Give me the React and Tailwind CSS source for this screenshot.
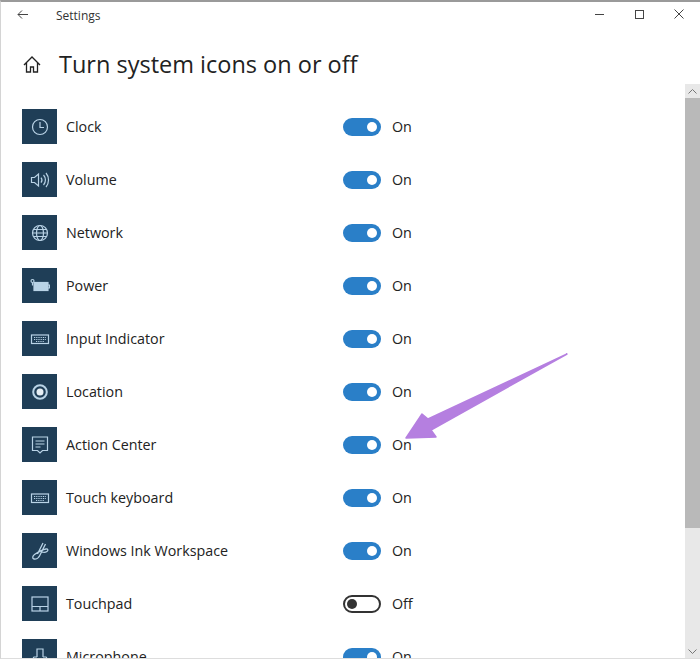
const ink = '#b9d3e6';

function ClockIcon() {
  return (
    <svg width="20" height="20" viewBox="0 0 20 20" fill="none" stroke={ink} strokeWidth="1.2">
      <circle cx="10" cy="10" r="7.5" />
      <path d="M10 5v5.500h4" />
    </svg>
  );
}

function VolumeIcon() {
  return (
    <svg width="20" height="20" viewBox="0 0 20 20" fill="none" stroke={ink} strokeWidth="1.2">
      <path d="M1.500 7.500h3l4-3.500v12l-4-3.500h-3z" />
      <path d="M11 7.500a4 4 0 0 1 0 5M13.500 5a7.500 7.500 0 0 1 0 10M16 3a11 11 0 0 1 0 14" />
    </svg>
  );
}

function NetworkIcon() {
  return (
    <svg width="20" height="20" viewBox="0 0 20 20" fill="none" stroke={ink} strokeWidth="1.2">
      <circle cx="10" cy="10" r="7.500" />
      <ellipse cx="10" cy="10" rx="3.500" ry="7.500" />
      <path d="M2.500 10h15M3.500 6.500h13M3.500 13.500h13" />
    </svg>
  );
}

function PowerIcon() {
  return (
    <svg width="20" height="20" viewBox="0 0 20 20" fill="none" stroke={ink} strokeWidth="1.2">
      <rect x="4" y="6.500" width="14" height="8" fill={ink} />
      <path d="M18 9h1.500v3H18" />
      <circle cx="2.500" cy="5" r="1.500" fill="#1f3e57" />
      <path d="M2.500 6.500v3" />
    </svg>
  );
}

function KeyboardIcon() {
  return (
    <svg width="20" height="20" viewBox="0 0 20 20" fill="none" stroke={ink} strokeWidth="1.2">
      <rect x="1.500" y="6" width="17" height="8.500" />
      <path d="M4 8.500h12M4 10.500h12M6 12.500h8" strokeDasharray="1 0.800" />
    </svg>
  );
}

function LocationIcon() {
  return (
    <svg width="20" height="20" viewBox="0 0 20 20" fill="none" stroke={ink}>
      <circle cx="10" cy="10" r="6.800" strokeWidth="2" />
      <circle cx="10" cy="10" r="3.500" fill="#e6eef4" stroke="none" />
    </svg>
  );
}

function ActionIcon() {
  return (
    <svg width="20" height="20" viewBox="0 0 20 20" fill="none" stroke={ink} strokeWidth="1.2">
      <path d="M2.500 2h15v13.500h-5L10 18l-2.500-2.500h-5z" />
      <path d="M5.500 6h9M5.500 9h9M5.500 12h5" />
    </svg>
  );
}

function InkIcon() {
  return (
    <svg width="20" height="20" viewBox="0 0 20 20" fill="none" stroke={ink} strokeWidth="1.300">
      <path d="M13 2 7.500 13M15.500 3 9.500 15c-1 2-3.500 3.500-5.500 3-2-.5-1.500-3 .5-4.500 3-2 8.500-5 11.500-5.500 2-.3 2.500 1.500 1 2.500-1.500 1-3.500 1-5 .5" />
    </svg>
  );
}

function TouchpadIcon() {
  return (
    <svg width="20" height="20" viewBox="0 0 20 20" fill="none" stroke={ink} strokeWidth="1.2">
      <rect x="2" y="3" width="16" height="14" />
      <path d="M2 12.500h16M10 12.500V17" />
    </svg>
  );
}

function MicIcon() {
  return (
    <svg width="20" height="20" viewBox="0 0 20 20" fill="none" stroke={ink} strokeWidth="1.200">
      <path d="M7 10V2h6v8M3.500 10H7M13 10h3.500M3.500 10v8M16.500 10v8" />
    </svg>
  );
}

const rows = [
  { label: 'Clock', icon: <ClockIcon />, on: true },
  { label: 'Volume', icon: <VolumeIcon />, on: true },
  { label: 'Network', icon: <NetworkIcon />, on: true },
  { label: 'Power', icon: <PowerIcon />, on: true },
  { label: 'Input Indicator', icon: <KeyboardIcon />, on: true },
  { label: 'Location', icon: <LocationIcon />, on: true },
  { label: 'Action Center', icon: <ActionIcon />, on: true },
  { label: 'Touch keyboard', icon: <KeyboardIcon />, on: true },
  { label: 'Windows Ink Workspace', icon: <InkIcon />, on: true },
  { label: 'Touchpad', icon: <TouchpadIcon />, on: false },
  { label: 'Microphone', icon: <MicIcon />, on: true },
];

function Toggle({ on }) {
  if (on) {
    return (
      <div className="flex h-[18px] w-[38px] items-center justify-end rounded-full bg-[#2a7fc8] pr-[4px]">
        <div className="h-[10px] w-[10px] rounded-full bg-white" />
      </div>
    );
  }
  return (
    <div className="flex h-[18px] w-[38px] items-center rounded-full border-2 border-[#333333] pl-[2px]">
      <div className="h-[10px] w-[10px] rounded-full bg-[#333333]" />
    </div>
  );
}

export default function App() {
  return (
    <div className="relative h-[659px] w-[700px] overflow-hidden border-t-2 border-b border-l border-t-[#9a9a9a] border-b-[#dddddd] border-l-[#d4d4d4] bg-white font-['Open_Sans','Noto_Sans',sans-serif] text-[#222222]">
      <div className="flex h-[28px] items-center pl-[16px]">
        <svg className="mb-[4px]" width="11" height="9" viewBox="0 0 11 9" fill="none" stroke="#444444" strokeWidth="1">
          <path d="M11 4.500H1M5 .5l-4 4 4 4" />
        </svg>
        <span className="ml-[28px] text-[12px] text-[#333333]">Settings</span>
        <div className="mb-[4px] ml-auto flex items-center pr-[16px]">
          <div className="h-px w-[9px] bg-[#444444]" />
          <div className="ml-[31px] h-[9px] w-[9px] border border-[#444444]" />
          <svg className="ml-[30px]" width="10" height="10" viewBox="0 0 10 10" stroke="#444444" strokeWidth="1">
            <path d="m.5.5 9 9M9.500.5l-9 9" />
          </svg>
        </div>
      </div>

      <div className="mt-[17px] flex items-center pl-[22px]">
        <svg width="18" height="17" viewBox="0 0 18 17" fill="none" stroke="#222222" strokeWidth="1.300">
          <path d="M1 9 9 1l8 8M3.500 6.500V16h4v-5h3v5h4V6.500" />
        </svg>
        <h1 className="ml-[18px] text-[23.500px] leading-[34px] font-normal">Turn system icons on or off</h1>
      </div>

      <div className="mt-[28px] flex flex-col gap-[18px] pl-[21px]">
        {rows.map((row) => (
          <div key={row.label} className="flex h-[35px] items-center">
            <div className="flex h-[35px] w-[35px] shrink-0 items-center justify-center bg-[#1f3e57]">{row.icon}</div>
            <span className="ml-[9px] w-[277px] text-[14.300px]">{row.label}</span>
            <Toggle on={row.on} />
            <span className="ml-[11px] text-[14.300px]">{row.on ? 'On' : 'Off'}</span>
          </div>
        ))}
      </div>

      {/* scrollbar */}
      <div className="absolute top-[82px] right-0 bottom-0 flex w-[15px] flex-col bg-[#e8e8e8]">
        <div className="flex h-[14px] items-center justify-center">
          <svg width="9" height="5" viewBox="0 0 9 5" fill="none" stroke="#777777">
            <path d="m.5 4.500 4-4 4 4" />
          </svg>
        </div>
        <div className="h-[430px] bg-[#b9b9b9]" />
        <div className="mt-auto flex h-[14px] items-center justify-center">
          <svg width="9" height="5" viewBox="0 0 9 5" fill="none" stroke="#777777">
            <path d="m.5.500 4 4 4-4" />
          </svg>
        </div>
      </div>

      {/* annotation arrow */}
      <svg className="absolute top-[348px] left-[399px]" width="170" height="92" viewBox="0 0 170 92">
        <path
          d="M167 4 31 80 36 87 6 88 22 64 28 69Z"
          fill="#b57fe0"
          stroke="#b57fe0"
          strokeWidth="1.500"
          strokeLinejoin="round"
        />
      </svg>
    </div>
  );
}
